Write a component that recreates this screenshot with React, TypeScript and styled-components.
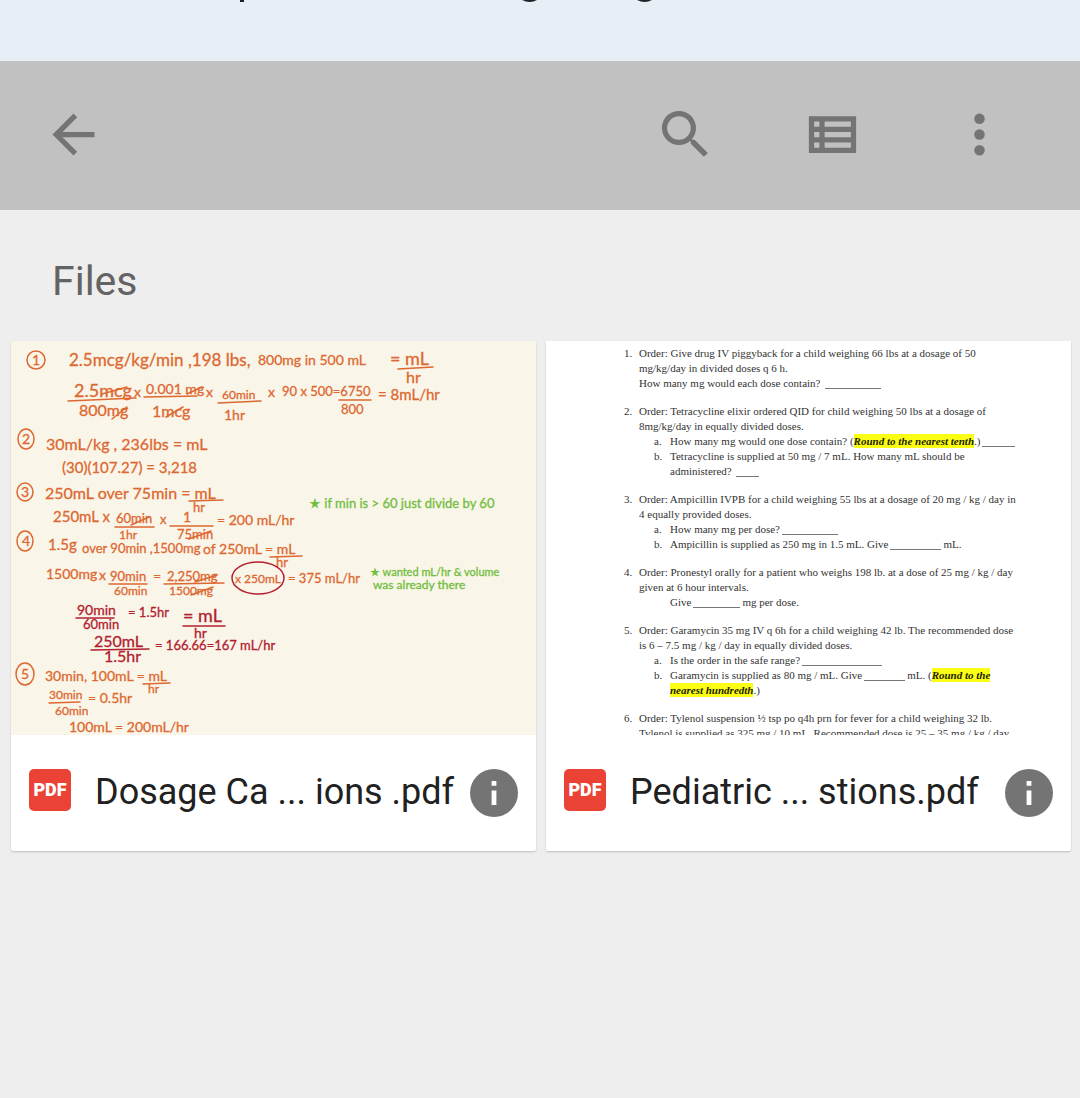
import React from "react";
import styled, { createGlobalStyle } from "styled-components";

const GlobalStyle = createGlobalStyle`
  * { box-sizing: border-box; }
  html { background: #eeeeee; }
  body { margin: 0; font-family: Roboto, "Liberation Sans", sans-serif; }
`;

const Page = styled.div`
  display: flex;
  flex-direction: column;
  min-height: 100vh;
  background: #eeeeee;
`;

const Banner = styled.div`
  height: 61px;
  background: #e8eef6;
  overflow: hidden;
  svg { display: block; }
`;

const Toolbar = styled.header`
  display: flex;
  align-items: center;
  justify-content: space-between;
  height: 149px;
  padding: 0 69px 2px 42px;
  background: #c1c1c1;
`;

const Actions = styled.div`
  display: flex;
  gap: 84px;
`;

const IconButton = styled.button<{ $size: number }>`
  display: block;
  flex: none;
  width: ${(p) => p.$size}px;
  height: ${(p) => p.$size}px;
  padding: 0;
  border: 0;
  background: none;
  color: #747474;
  cursor: pointer;
  svg { display: block; width: 100%; height: 100%; }
`;

const SectionTitle = styled.h2`
  margin: 0;
  padding: 47px 52px 36px;
  font-size: 41px;
  line-height: 48px;
  font-weight: 400;
  color: #636363;
`;

const FileGrid = styled.main`
  display: grid;
  grid-template-columns: 1fr 1fr;
  gap: 10px;
  padding: 0 9px 0 11px;
`;

const Card = styled.article`
  min-width: 0;
  background: #ffffff;
  border-radius: 2px;
  box-shadow: 0 1px 2px rgba(0, 0, 0, 0.2);
`;

const Preview = styled.div<{ $paper: string }>`
  aspect-ratio: 4 / 3;
  overflow: hidden;
  background: ${(p) => p.$paper};
  svg { display: block; width: 100%; height: 100%; }
`;

const CardFooter = styled.footer`
  display: flex;
  align-items: center;
  height: 116px;
  padding: 0 18px;
`;

const PdfBadge = styled.span`
  flex: none;
  width: 42px;
  height: 42px;
  margin: 0 24px 6px 0;
  border-radius: 5px;
  background: #ea4335;
  color: #ffffff;
  font-size: 18px;
  line-height: 42px;
  font-weight: 900;
  text-align: center;
`;

const FileName = styled.span`
  flex: 1;
  min-width: 0;
  padding-bottom: 2px;
  white-space: nowrap;
  font-size: 36px;
  line-height: 48px;
  color: #212121;
`;

const Ink = styled.text<{ $size: number }>`
  font-family: Lato, sans-serif;
  font-size: ${(p) => p.$size}px;
`;

const Sheet = styled.ol`
  display: flex;
  flex-direction: column;
  gap: 13px;
  margin: 0;
  padding: 5px 0 0 78px;
  list-style: none;
  white-space: nowrap;
  font-family: "Liberation Serif", serif;
  font-size: 11px;
  line-height: 15px;
  color: #333333;
`;

const Entry = styled.li<{ $marker: number }>`
  display: grid;
  grid-template-columns: ${(p) => p.$marker}px 1fr;
`;

const Parts = styled.ol<{ $indent: number }>`
  margin: 0;
  padding: 0 0 0 ${(p) => p.$indent}px;
  list-style: none;
`;

const Blank = styled.span<{ $width: number }>`
  display: inline-block;
  width: ${(p) => p.$width}px;
  height: 10px;
  margin: 0 2px;
  border-bottom: 1px solid #777777;
  vertical-align: -2px;
`;

const Mark = styled.mark`
  padding: 1px 0;
  background: #fbff14;
  color: #222200;
  font-weight: 700;
  font-style: italic;
`;

type Stroke = [x: number, y: number, size: number, text: string];

const orange: Stroke[] = [
  [21, 24, 14, "1"],
  [58, 25, 17, "2.5mcg/kg/min ,198 lbs,"],
  [247, 24, 14, "800mg in 500 mL"],
  [379, 24, 18, "= mL"],
  [395, 42, 16, "hr"],
  [63, 56, 18, "2.5mcg"],
  [123, 56, 14, "x"],
  [135, 53, 14, "0.001 mg"],
  [195, 56, 14, "x"],
  [211, 58, 12, "60min"],
  [257, 56, 14, "x"],
  [271, 55, 13, "90 x 500=6750"],
  [367, 59, 15, "= 8mL/hr"],
  [68, 75, 16, "800mg"],
  [141, 76, 16, "1mcg"],
  [213, 79, 14, "1hr"],
  [330, 73, 13, "800"],
  [11, 103, 14, "2"],
  [35, 109, 16, "30mL/kg , 236lbs  = mL"],
  [51, 132, 15, "(30)(107.27) = 3,218"],
  [10, 156, 14, "3"],
  [34, 158, 16, "250mL over 75min = mL"],
  [182, 171, 13, "hr"],
  [42, 181, 15, "250mL x"],
  [105, 182, 13, "60min"],
  [149, 183, 13, "x"],
  [172, 181, 14, "1"],
  [206, 184, 14, "= 200 mL/hr"],
  [108, 198, 12, "1hr"],
  [166, 198, 13, "75min"],
  [11, 205, 14, "4"],
  [37, 209, 15, "1.5g"],
  [71, 212, 13, "over 90min ,1500mg"],
  [192, 213, 14, "of 250mL = mL"],
  [265, 226, 13, "hr"],
  [35, 238, 14, "1500mg"],
  [88, 239, 14, "x"],
  [99, 240, 13, "90min"],
  [142, 240, 14, "="],
  [156, 240, 13, "2,250mg"],
  [224, 242, 12, "x 250mL"],
  [277, 242, 13, "= 375 mL/hr"],
  [103, 254, 12, "60min"],
  [158, 254, 12, "1500mg"],
  [10, 338, 14, "5"],
  [34, 340, 14, "30min, 100mL = mL"],
  [137, 352, 12, "hr"],
  [38, 358, 12, "30min"],
  [77, 362, 14, "= 0.5hr"],
  [44, 374, 12, "60min"],
  [58, 391, 14, "100mL  = 200mL/hr"],
];

const crimson: Stroke[] = [
  [66, 274, 14, "90min"],
  [117, 276, 13, "= 1.5hr"],
  [172, 281, 18, "= mL"],
  [72, 288, 13, "60min"],
  [183, 297, 14, "hr"],
  [83, 306, 16, "250mL"],
  [144, 309, 13, "= 166.66=167 mL/hr"],
  [93, 321, 16, "1.5hr"],
];

const green: Stroke[] = [
  [298, 167, 13, "★ if min is > 60 just divide by 60"],
  [359, 235, 11, "★ wanted mL/hr & volume"],
  [362, 248, 12, "was already there"],
];

const InkLayer = ({ color, strokes }: { color: string; strokes: Stroke[] }) => (
  <g fill={color} stroke={color} strokeWidth="0.3">
    {strokes.map(([x, y, size, text]) => (
      <Ink key={`${x}-${y}`} x={x} y={y} $size={size}>
        {text}
      </Ink>
    ))}
  </g>
);

const HandwrittenNotes = () => (
  <svg viewBox="0 0 525 394" preserveAspectRatio="xMinYMin slice" role="img" aria-label="Handwritten dosage calculations">
    <InkLayer color="#dd6831" strokes={orange} />
    <InkLayer color="#b3202f" strokes={crimson} />
    <InkLayer color="#72bd3c" strokes={green} />
    <g fill="none" stroke="#dd6831" strokeWidth="1.5" strokeLinecap="round">
      <ellipse cx="25" cy="19" rx="9" ry="9" />
      <ellipse cx="15" cy="98" rx="8" ry="10" />
      <ellipse cx="14" cy="151" rx="8" ry="9" />
      <ellipse cx="14" cy="200" rx="8" ry="10" />
      <ellipse cx="14" cy="333" rx="9" ry="11" />
      <path d="M387 28 L422 26 M57 60 L125 57 M133 56 L186 55 M207 62 L250 60 M328 59 L360 59 M178 160 L212 159 M104 186 L143 186 M159 185 L202 185 M259 216 L291 215 M98 243 L136 243 M153 243 L213 242 M132 343 L159 342 M38 362 L69 361" />
      <path d="M91 53 L116 46 M101 78 L116 66 M155 76 L172 66 M176 53 L191 46 M120 184 L138 176 M178 198 L200 190 M184 241 L206 234 M180 254 L202 246" />
    </g>
    <g fill="none" stroke="#b3202f" strokeWidth="1.5" strokeLinecap="round">
      <ellipse cx="247" cy="237" rx="26" ry="16" />
      <path d="M65 277 L103 277 M172 285 L214 285 M80 309 L138 308" />
    </g>
  </svg>
);

const Worksheet = () => (
  <Sheet>
    <Entry $marker={15}>
      <span>1.</span>
      <div>
        Order: Give drug IV piggyback for a child weighing 66 lbs at a dosage of 50<br />
        mg/kg/day in divided doses q 6 h.<br />
        How many mg would each dose contain? <Blank $width={56} />
      </div>
    </Entry>
    <Entry $marker={15}>
      <span>2.</span>
      <div>
        Order: Tetracycline elixir ordered QID for child weighing 50 lbs at a dosage of<br />
        8mg/kg/day in equally divided doses.
        <Parts $indent={15}>
          <Entry $marker={16}>
            <span>a.</span>
            <div>How many mg would one dose contain? (<Mark>Round to the nearest tenth</Mark>.)<Blank $width={33} /></div>
          </Entry>
          <Entry $marker={16}>
            <span>b.</span>
            <div>
              Tetracycline is supplied at 50 mg / 7 mL. How many mL should be<br />
              administered? <Blank $width={23} />
            </div>
          </Entry>
        </Parts>
      </div>
    </Entry>
    <Entry $marker={15}>
      <span>3.</span>
      <div>
        Order: Ampicillin IVPB for a child weighing 55 lbs at a dosage of 20 mg / kg / day in<br />
        4 equally provided doses.
        <Parts $indent={15}>
          <Entry $marker={16}>
            <span>a.</span>
            <div>How many mg per dose?<Blank $width={56} /></div>
          </Entry>
          <Entry $marker={16}>
            <span>b.</span>
            <div>Ampicillin is supplied as 250 mg in 1.5 mL. Give<Blank $width={51} />mL.</div>
          </Entry>
        </Parts>
      </div>
    </Entry>
    <Entry $marker={15}>
      <span>4.</span>
      <div>
        Order: Pronestyl orally for a patient who weighs 198 lb. at a dose of 25 mg / kg / day<br />
        given at 6 hour intervals.
        <Parts $indent={31}>
          <li>Give<Blank $width={47} />mg per dose.</li>
        </Parts>
      </div>
    </Entry>
    <Entry $marker={15}>
      <span>5.</span>
      <div>
        Order: Garamycin 35 mg IV q 6h for a child weighing 42 lb. The recommended dose<br />
        is 6 – 7.5 mg / kg / day in equally divided doses.
        <Parts $indent={15}>
          <Entry $marker={16}>
            <span>a.</span>
            <div>Is the order in the safe range?<Blank $width={80} /></div>
          </Entry>
          <Entry $marker={16}>
            <span>b.</span>
            <div>
              Garamycin is supplied as 80 mg / mL. Give<Blank $width={41} />mL. (<Mark>Round to the</Mark><br />
              <Mark>nearest hundredth</Mark>.)
            </div>
          </Entry>
        </Parts>
      </div>
    </Entry>
    <Entry $marker={15}>
      <span>6.</span>
      <div>
        Order: Tylenol suspension ½ tsp po q4h prn for fever for a child weighing 32 lb.<br />
        Tylenol is supplied as 325 mg / 10 mL. Recommended dose is 25 – 35 mg / kg / day
      </div>
    </Entry>
  </Sheet>
);

const InfoIcon = () => (
  <svg viewBox="2 2 20 20" aria-hidden="true">
    <circle cx="12" cy="12" r="10" fill="#747474" />
    <path d="M11 7h2v2h-2z M11 11h2v6h-2z" fill="#ffffff" />
  </svg>
);

type FileCardProps = { name: string; paper: string; children: React.ReactNode };

const FileCard = ({ name, paper, children }: FileCardProps) => (
  <Card>
    <Preview $paper={paper}>{children}</Preview>
    <CardFooter>
      <PdfBadge>PDF</PdfBadge>
      <FileName>{name}</FileName>
      <IconButton $size={48} aria-label="File details">
        <InfoIcon />
      </IconButton>
    </CardFooter>
  </Card>
);

export default function App() {
  return (
    <Page>
      <GlobalStyle />
      <Banner>
        <svg width="700" height="4" viewBox="0 0 700 4" aria-hidden="true">
          <path d="M240 0h4v2h-4z M522 0h15q-7 4-15 0z M637 0h15q-7 4-15 0z" fill="#202124" />
        </svg>
      </Banner>
      <Toolbar>
        <IconButton $size={63} aria-label="Back">
          <svg viewBox="0 0 24 24" fill="currentColor">
            <path d="M20 11H7.83l5.59-5.59L12 4l-8 8 8 8 1.41-1.41L7.83 13H20v-2z" />
          </svg>
        </IconButton>
        <Actions>
          <IconButton $size={63} aria-label="Search">
            <svg viewBox="0 0 24 24" fill="currentColor">
              <path d="M15.5 14h-.79l-.28-.27A6.471 6.471 0 0 0 16 9.5 6.5 6.5 0 1 0 9.5 16c1.61 0 3.09-.59 4.23-1.57l.27.28v.79l5 4.99L20.49 19l-4.99-5zm-6 0C7.01 14 5 11.99 5 9.5S7.01 5 9.5 5 14 7.01 14 9.5 11.99 14 9.5 14z" />
            </svg>
          </IconButton>
          <IconButton $size={63} aria-label="List view">
            <svg viewBox="0 0 24 24" fill="currentColor" fillRule="evenodd">
              <path d="M3 5h18v14H3z M5 7v2h2V7z M9 7v2h10V7z M5 11v2h2v-2z M9 11v2h10v-2z M5 15v2h2v-2z M9 15v2h10v-2z" />
            </svg>
          </IconButton>
          <IconButton $size={63} aria-label="More options">
            <svg viewBox="0 0 24 24" fill="currentColor">
              <circle cx="12" cy="6" r="2" />
              <circle cx="12" cy="12" r="2" />
              <circle cx="12" cy="18" r="2" />
            </svg>
          </IconButton>
        </Actions>
      </Toolbar>
      <SectionTitle>Files</SectionTitle>
      <FileGrid>
        <FileCard name="Dosage Ca ... ions .pdf" paper="#f9f6e9">
          <HandwrittenNotes />
        </FileCard>
        <FileCard name="Pediatric ... stions.pdf" paper="#ffffff">
          <Worksheet />
        </FileCard>
      </FileGrid>
    </Page>
  );
}
